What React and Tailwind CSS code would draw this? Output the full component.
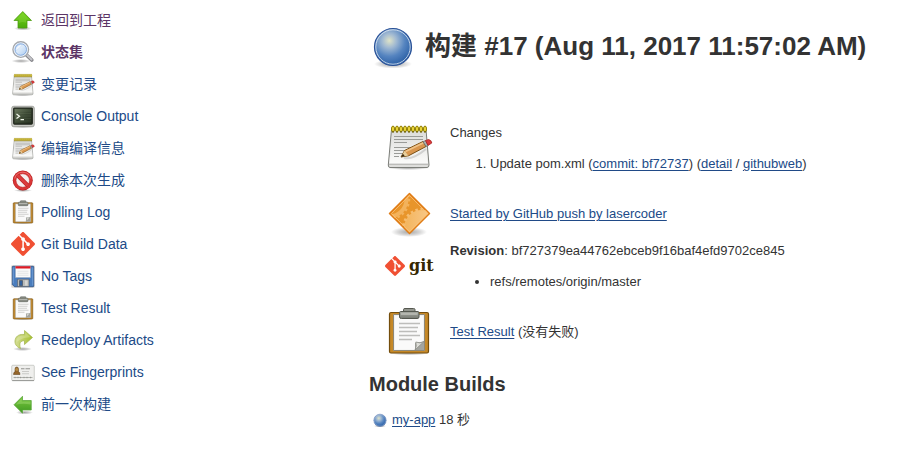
import { SiGit } from "react-icons/si";

const small = "size-6 shrink-0";
const large = "size-12 shrink-0";

function Gradients() {
  return (
    <svg className="absolute size-0" aria-hidden="true">
      <defs>
        <radialGradient id="shadow">
          <stop offset="0" stopColor="#000" stopOpacity="0.35" />
          <stop offset="0.6" stopColor="#000" stopOpacity="0.16" />
          <stop offset="1" stopColor="#000" stopOpacity="0" />
        </radialGradient>
        <radialGradient id="orb" cx="0.4" cy="0.33" r="0.65">
          <stop offset="0" stopColor="#dfe3c8" />
          <stop offset="0.3" stopColor="#9fb8d2" />
          <stop offset="0.65" stopColor="#5584c0" />
          <stop offset="1" stopColor="#2f63a8" />
        </radialGradient>
        <linearGradient id="green" x1="0" y1="0" x2="0" y2="1">
          <stop offset="0" stopColor="#73d216" />
          <stop offset="1" stopColor="#4bab0c" />
        </linearGradient>
        <linearGradient id="greenSide" x1="0" y1="0" x2="0" y2="1">
          <stop offset="0" stopColor="#7cc83f" />
          <stop offset="1" stopColor="#3f9a22" />
        </linearGradient>
        <linearGradient id="lime" x1="0" y1="0" x2="1" y2="0">
          <stop offset="0" stopColor="#d3dc92" />
          <stop offset="1" stopColor="#a6c02f" />
        </linearGradient>
        <linearGradient id="paper" x1="0" y1="0" x2="0" y2="1">
          <stop offset="0" stopColor="#dcdcda" />
          <stop offset="1" stopColor="#fbfbfa" />
        </linearGradient>
        <linearGradient id="screen" x1="0" y1="0" x2="1" y2="1">
          <stop offset="0" stopColor="#6d7a60" />
          <stop offset="0.5" stopColor="#3d4a35" />
          <stop offset="1" stopColor="#232c1e" />
        </linearGradient>
        <linearGradient id="lens" x1="0" y1="0" x2="1" y2="1">
          <stop offset="0" stopColor="#8fb8ea" />
          <stop offset="0.45" stopColor="#deebf9" />
          <stop offset="1" stopColor="#9dc3ef" />
        </linearGradient>
        <linearGradient id="clip" x1="0" y1="0" x2="0" y2="1">
          <stop offset="0" stopColor="#a9aca4" />
          <stop offset="1" stopColor="#777a73" />
        </linearGradient>
        <linearGradient id="diamond" x1="0" y1="0" x2="1" y2="0">
          <stop offset="0" stopColor="#f3b45c" />
          <stop offset="1" stopColor="#fad09a" />
        </linearGradient>
        <clipPath id="diamondClip">
          <path d="M24.500 5.500 43.500 24.500 24.500 43.500 5.500 24.500Z" />
        </clipPath>
      </defs>
    </svg>
  );
}

function Icon({ className, children }) {
  return (
    <svg viewBox="0 0 48 48" className={className} aria-hidden="true">
      {children}
    </svg>
  );
}

function UpArrow({ className }) {
  return (
    <Icon className={className}>
      <ellipse cx="24" cy="41" rx="18" ry="4" fill="url(#shadow)" />
      <path d="M23.500 7 41 25H32V40H14V25H6Z" fill="url(#green)" stroke="#4c9a10" strokeWidth="1.500" strokeLinejoin="round" />
      <path d="M23.500 9.500 37 23.500H30.500V30Q22 26 15.500 31V23.500H9.500Z" fill="#a5e85a" opacity="0.25" />
    </Icon>
  );
}

function LeftArrow({ className }) {
  return (
    <Icon className={className}>
      <ellipse cx="27" cy="41" rx="17" ry="4" fill="url(#shadow)" />
      <path d="M6 25.500 23 8.500V17H40.500V36H23V42.500Z" fill="url(#greenSide)" stroke="#5aa63a" strokeWidth="1.500" strokeLinejoin="round" />
      <path d="M9 25.500 21.500 13V19H39V25Q24 22 9 25.500Z" fill="#b5e58a" opacity="0.35" />
    </Icon>
  );
}

function Magnifier({ className }) {
  return (
    <Icon className={className}>
      <ellipse cx="20" cy="42" rx="19" ry="4" fill="url(#shadow)" />
      <path d="M31 30 41.500 40" stroke="#85858a" strokeWidth="7.500" strokeLinecap="round" />
      <path d="M30 28 41 39" stroke="#c4c5ca" strokeWidth="4" strokeLinecap="round" />
      <circle cx="19.500" cy="19" r="15.500" fill="url(#lens)" stroke="#a6a8ac" strokeWidth="3" />
      <circle cx="19.500" cy="19" r="13" fill="none" stroke="#eef2f6" strokeWidth="2.500" />
      <circle cx="19.500" cy="19" r="11.500" fill="none" stroke="#6f9bd8" strokeWidth="1.500" />
      <path d="M10 20C10 13 15 10 21 10 18 14 14 18 10 20Z" fill="#fff" opacity="0.7" />
    </Icon>
  );
}

function Notepad({ className }) {
  return (
    <Icon className={className}>
      <ellipse cx="23.500" cy="46" rx="21" ry="2" fill="url(#shadow)" />
      <path d="M6.500 7.500H41L44 43Q44 45.500 42 45.500H5Q3.200 45.500 3.300 43Z" fill="#dededc" stroke="#7c7e79" />
      <path d="M7.500 8.500H40L43 41.500H4.300Z" fill="url(#paper)" />
      <path d="M4 42.300H43.500" stroke="#b4b5b2" />
      <path d="M9 14.500H38M9 17.500H38M9 20.500H22M9 25.500H30M9 28.500H28M9 31.500H20M9 34.500H14" stroke="#9a9b98" />
      {[8, 12, 16, 20, 24, 28, 32, 36, 40].map((x) => (
        <g key={x}>
          <ellipse cx={x} cy="7" rx="1.500" ry="3" fill="#f2dc3c" stroke="#8d7b00" strokeWidth="1" />
          <circle cx={x} cy="10" r="0.800" fill="#5d5000" />
        </g>
      ))}
      <path d="M19 36Q28 38 41 27" stroke="#888" strokeWidth="2" fill="none" opacity="0.3" />
      <path d="M16 35 19.500 28.500 38 19.500 41 24.500 23.500 33.800Z" fill="#d9964e" stroke="#7a4f14" strokeWidth="1" strokeLinejoin="round" />
      <path d="M20.500 29.500 38.500 20.800" stroke="#f0c287" strokeWidth="1.800" />
      <path d="M16 35 19.500 28.800 23.200 33.600Z" fill="#e8cf9c" />
      <path d="M15.800 35.200 18 31.800 19.800 34.200Z" fill="#3a2a10" />
      <path d="M38 19.700 40.500 18.600 43 23.400 41 24.500Z" fill="#aab0ad" stroke="#656a66" strokeWidth="0.700" />
      <path d="M40.500 18.500 43.500 17.500Q46.500 18 46.800 21L43 23.400Z" fill="#dd3a3a" stroke="#a52525" strokeWidth="0.800" />
    </Icon>
  );
}

function Terminal({ className }) {
  return (
    <Icon className={className}>
      <ellipse cx="24" cy="45" rx="23" ry="3" fill="url(#shadow)" />
      <rect x="1.500" y="4.500" width="45" height="41" rx="4" fill="#c9cac5" stroke="#8b8d87" strokeWidth="1.500" />
      <rect x="5.500" y="8" width="37" height="32" rx="1.500" fill="url(#screen)" stroke="#1c2218" strokeWidth="2.500" />
      <path d="M8 14H40M8 19H40M8 24H40M8 29H40M8 34H40" stroke="#8b9a7c" strokeWidth="1" opacity="0.3" />
      <path d="M11 20 17 24.500 11 29M19 31H26" stroke="#f2f6ec" strokeWidth="2.500" fill="none" />
    </Icon>
  );
}

function Forbidden({ className }) {
  return (
    <Icon className={className}>
      <ellipse cx="24" cy="45" rx="18" ry="3" fill="url(#shadow)" />
      <circle cx="23.500" cy="25" r="20" fill="#b42020" />
      <circle cx="23.500" cy="25" r="18.800" fill="#d93636" />
      <circle cx="23.500" cy="25" r="13.500" fill="#f6f0ef" stroke="#b42222" />
      <path d="M13 14.500 34 35.500" stroke="#b42222" strokeWidth="8" />
      <path d="M13 14.500 34 35.500" stroke="#dc3c3c" strokeWidth="6" />
      <path d="M7.500 21A16.500 16.500 0 0 1 39.500 21" stroke="#f07c7c" strokeWidth="1.500" fill="none" />
    </Icon>
  );
}

function Clipboard({ className }) {
  return (
    <Icon className={className}>
      <ellipse cx="24" cy="46" rx="20" ry="2.500" fill="url(#shadow)" />
      <rect x="4.500" y="5.500" width="39" height="40.500" rx="1.500" fill="#c58827" stroke="#744d0c" strokeWidth="1.200" />
      <path d="M8.500 7.500H39.500V43.500H8.500Z" fill="#f1f1ef" stroke="#8e8878" />
      <path d="M10 9H38V34L30 42.500H10Z" fill="#fafafa" />
      <path d="M14 16.500H35M14 20.500H33M14 24.500H32M14 28.500H35M14 32.500H27" stroke="#bdbdbb" strokeWidth="1.400" />
      <path d="M30 43V36L39 34.500V43Z" fill="#a3a49f" />
      <path d="M30 43Q32 39 30.800 35 35 37 39 34.500Z" fill="#deded9" stroke="#898a84" strokeWidth="0.800" />
      <path d="M18.500 5V2.500Q18.500 1.500 20 1.500H28.500Q30 1.500 30 2.500V5Z" fill="#92958d" stroke="#555850" />
      <path d="M15.500 4.500Q14.500 4.500 14.500 6V10Q14.500 11.500 16.500 11.500H32Q34 11.500 34 10V6Q34 4.500 33 4.500Z" fill="url(#clip)" stroke="#555850" />
      <path d="M16 7H32.500" stroke="#cfd1cb" strokeWidth="1" />
    </Icon>
  );
}

function Floppy({ className }) {
  return (
    <Icon className={className}>
      <rect x="0.500" y="2.500" width="47" height="45" rx="2" fill="#dcd9d6" />
      <path d="M4 4.500H44Q45.500 4.500 45.500 6V44Q45.500 45.500 44 45.500H7L2.500 41V6Q2.500 4.500 4 4.500Z" fill="#4a7dbd" stroke="#274b7c" strokeWidth="1.500" />
      <path d="M4.500 7V39M43.500 7V43" stroke="#7ca6dc" strokeWidth="1.500" />
      <path d="M9 5H39V27H9Z" fill="#fafafa" stroke="#99a9bd" />
      <path d="M9 4.500H39V9H9Z" fill="#e01b24" />
      <path d="M13 14.500H35M13 18.500H35M13 22.500H35" stroke="#d4d6d8" strokeWidth="1.200" />
      <path d="M13 30.500H36V45H13Z" fill="#b9bab8" stroke="#4d535b" />
      <path d="M17 33H23V43.500H17Z" fill="#33619d" stroke="#3c4148" />
      <path d="M28 33H33V43H28Z" fill="#d5d6d4" />
    </Icon>
  );
}

function Redo({ className }) {
  return (
    <Icon className={className}>
      <ellipse cx="23" cy="42" rx="19" ry="4" fill="url(#shadow)" />
      <path d="M27 5 43 19 27 33V25.500C19 25 15.500 30 19 41 10 37 6.500 31 8.500 23 10.500 15 18 12 27 13Z" fill="url(#lime)" stroke="#a3b64f" strokeWidth="1.500" strokeLinejoin="round" />
      <path d="M28.500 8.500 39 18.500Q26 18 17 24 12 27 11 30 9 19 20 15.500 24 14.500 28.500 15Z" fill="#f0f5c9" opacity="0.3" />
    </Icon>
  );
}

function IdCard({ className }) {
  return (
    <Icon className={className}>
      <rect x="1.500" y="10.500" width="45" height="31" rx="2" fill="#efefed" stroke="#bcbdba" strokeWidth="1.500" />
      <path d="M2.500 41H46" stroke="#898a87" strokeWidth="1.500" />
      <path d="M5 29Q5 24 8 23.500V18Q8 14 11.500 14T15 18V23.500Q18 24 18 29Z" fill="#946529" stroke="#573710" />
      <circle cx="11.500" cy="19" r="3" fill="#b58b45" />
      <path d="M20 17.500H27M29 17.500H38" stroke="#555753" strokeWidth="1.500" opacity="0.8" />
      <path d="M22 23H36M22 27.500H36" stroke="#888a85" strokeWidth="1.200" opacity="0.6" />
      <path d="M5 35H43M8 33.500V36.500M14 33.500V36.500M19 33.500V36.500M26 33.500V36.500M32 33.500V36.500M39 33.500V36.500" stroke="#858682" strokeWidth="1.200" />
    </Icon>
  );
}

function Orb({ className }) {
  return (
    <Icon className={className}>
      <ellipse cx="24" cy="42" rx="19" ry="4.500" fill="url(#shadow)" />
      <circle cx="24" cy="25" r="18.500" fill="url(#orb)" stroke="#2a5298" strokeWidth="1.200" />
      <circle cx="24" cy="25" r="17.200" fill="none" stroke="#e5edf5" strokeWidth="1" opacity="0.75" />
    </Icon>
  );
}

function GearDiamond({ className }) {
  return (
    <Icon className={className}>
      <ellipse cx="24" cy="43" rx="18" ry="5" fill="url(#shadow)" />
      <path d="M24.500 4.500 44.500 24.500 24.500 44.500 4.500 24.500Z" fill="#e8952b" stroke="#e07c16" strokeWidth="1.500" strokeLinejoin="round" />
      <g clipPath="url(#diamondClip)">
        <circle cx="4" cy="10" r="17.500" fill="none" stroke="#f3b25c" strokeWidth="4" />
        <circle cx="4" cy="10" r="20" fill="none" stroke="#f3b25c" strokeWidth="2.500" strokeDasharray="2.500 2.500" />
        <circle cx="37" cy="39" r="18" fill="url(#diamond)" />
        <circle cx="37" cy="39" r="18.500" fill="none" stroke="#f6bd70" strokeWidth="3" strokeDasharray="2.500 2.500" />
      </g>
      <path d="M24.500 6.500 42.500 24.500 24.500 42.500 6.500 24.500Z" fill="none" stroke="#fbc078" strokeWidth="0.800" />
    </Icon>
  );
}

function GitMark({ className }) {
  return <SiGit className={className} color="#f05033" aria-hidden="true" />;
}

const blue = "text-[#204a87]";
const visited = "text-[#5c3566]";

const tasks = [
  { label: "返回到工程", Glyph: UpArrow, tone: visited },
  { label: "状态集", Glyph: Magnifier, tone: "text-[#5c3566] font-bold" },
  { label: "变更记录", Glyph: Notepad, tone: blue },
  { label: "Console Output", Glyph: Terminal, tone: blue },
  { label: "编辑编译信息", Glyph: Notepad, tone: blue },
  { label: "删除本次生成", Glyph: Forbidden, tone: blue },
  { label: "Polling Log", Glyph: Clipboard, tone: blue },
  { label: "Git Build Data", Glyph: GitMark, tone: blue },
  { label: "No Tags", Glyph: Floppy, tone: blue },
  { label: "Test Result", Glyph: Clipboard, tone: blue },
  { label: "Redeploy Artifacts", Glyph: Redo, tone: blue },
  { label: "See Fingerprints", Glyph: IdCard, tone: blue },
  { label: "前一次构建", Glyph: LeftArrow, tone: blue },
];

function Link({ children }) {
  return (
    <a href="#" className="text-[#204a87] underline underline-offset-2">
      {children}
    </a>
  );
}

export default function App() {
  return (
    <div className="flex min-h-screen bg-white text-[13px] leading-5 text-[#333] font-['Liberation_Sans','Noto_Sans_CJK_SC',sans-serif]">
      <Gradients />
      <nav className="w-[361px] shrink-0 pt-2 pl-[11px]">
        <ul className="flex flex-col gap-2 text-sm">
          {tasks.map(({ label, Glyph, tone }) => (
            <li key={label} className="flex">
              <a href="#" className={`flex h-6 items-center gap-1.5 ${tone}`}>
                <Glyph className={small} />
                <span>{label}</span>
              </a>
            </li>
          ))}
        </ul>
      </nav>

      <main className="min-w-0 flex-1 pt-[22px] pl-2">
        <h1 className="flex items-center gap-2 text-[26px] leading-8 font-bold">
          <Orb className={large} />
          <span>构建 #17 (Aug 11, 2017 11:57:02 AM)</span>
        </h1>

        <div className="mt-13 pl-4">
          <section className="flex items-start gap-[17px]">
            <Notepad className={large} />
            <div className="pt-px">
              <p>Changes</p>
              <ol className="mt-[11px] list-decimal pl-10">
                <li>
                  Update pom.xml (<Link>commit: bf72737</Link>) (<Link>detail</Link> / <Link>githubweb</Link>)
                </li>
              </ol>
            </div>
          </section>

          <section className="mt-[15px] flex items-center gap-[17px]">
            <GearDiamond className={large} />
            <p className="pt-0.5">
              <Link>Started by GitHub push by lasercoder</Link>
            </p>
          </section>

          <section className="mt-0.5 flex items-center gap-[17px]">
            <div className="flex w-12 shrink-0 items-center gap-1">
              <GitMark className="size-5 shrink-0" />
              <span className="font-['DejaVu_Serif',serif] text-base leading-5 font-bold text-[#362701]">git</span>
            </div>
            <div className="pt-0.5">
              <p>
                <b>Revision</b>: bf727379ea44762ebceb9f16baf4efd9702ce845
              </p>
              <ul className="mt-[11px] list-disc pl-10">
                <li>refs/remotes/origin/master</li>
              </ul>
            </div>
          </section>

          <section className="mt-[15px] flex items-center gap-[17px]">
            <Clipboard className={large} />
            <p className="pt-0.5">
              <Link>Test Result</Link> (没有失败)
            </p>
          </section>
        </div>

        <h2 className="mt-[15px] text-xl leading-7 font-bold">Module Builds</h2>
        <div className="mt-3 flex items-center gap-1 pl-[3px]">
          <Orb className="size-4 shrink-0" />
          <p>
            <Link>my-app</Link> 18 秒
          </p>
        </div>
      </main>
    </div>
  );
}
